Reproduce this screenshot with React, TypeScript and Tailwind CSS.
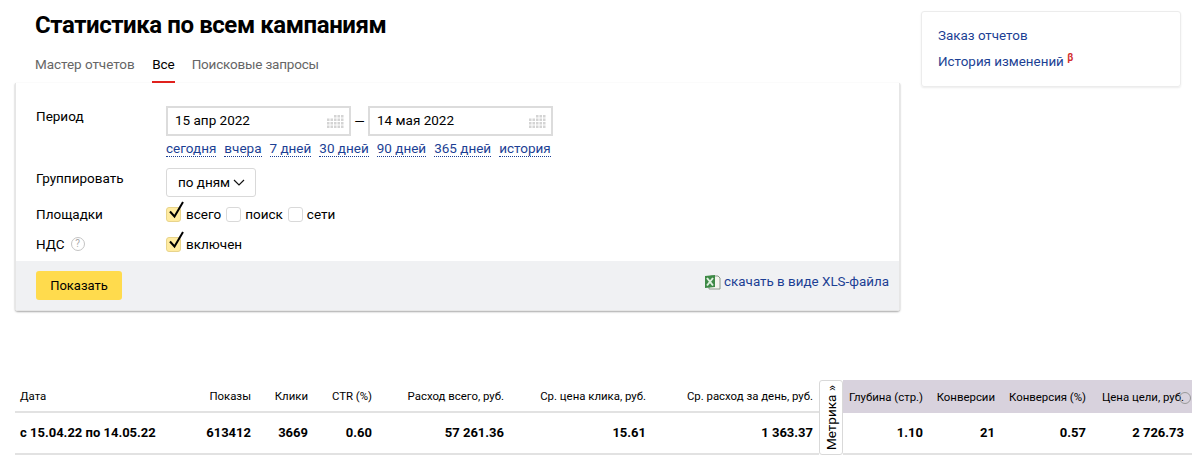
const font = "font-['Roboto','Noto_Sans',sans-serif]";

function CalendarDots() {
  const cells = [];
  for (let r = 0; r < 4; r++) {
    for (let c = 0; c < 5; c++) {
      if (r === 0 && c < 2) continue;
      cells.push(<rect key={`${r}-${c}`} x={c * 3.5} y={r * 3.5} width="2.5" height="2.5" fill="#d4d4d4" />);
    }
  }
  return (
    <svg width="17" height="13" viewBox="0 0 17 13" className="shrink-0">
      {cells}
    </svg>
  );
}

function DateInput({ value }: { value: string }) {
  return (
    <div className="flex h-[30px] w-[185px] items-center justify-between border-2 border-[#dcdcdc] pl-[7px] pr-[5px] text-[13.5px] text-black">
      <span className="pb-[2px]">{value}</span>
      <CalendarDots />
    </div>
  );
}

function Dotted({ children }: { children: string }) {
  return <a className="border-b border-dotted border-[#1c3f94] leading-[16px] text-[#1c3f94]">{children}</a>;
}

function Checkbox({ checked }: { checked?: boolean }) {
  return (
    <span
      className={`relative inline-block h-[15px] w-[15px] shrink-0 rounded-[3px] border ${
        checked ? "border-[#e8d48c] bg-[#ffeba0]" : "border-[#d9d9d9] bg-white"
      }`}
    >
      {checked && (
        <svg width="18" height="20" viewBox="0 0 18 20" className="absolute bottom-[1px] left-[1px]">
          <path d="M2 11.5 L6.5 16.5 L15 2" fill="none" stroke="#000" strokeWidth="2" />
        </svg>
      )}
    </span>
  );
}

function ExcelIcon() {
  return (
    <svg width="17" height="17" viewBox="0 0 17 17" className="shrink-0">
      <path d="M7 2 H14 L16 4 V15 H5 V3 Z" fill="#f4f4ee" stroke="#8a9a8a" />
      <path d="M1 2 L11 1 V13 L1 14 Z" fill="#3e8a46" />
      <path d="M3 4 L9 11.5 M9 4 L3 11.5" stroke="#dff0df" strokeWidth="2" />
    </svg>
  );
}

const header = ["Показы", "Клики", "CTR (%)", "Расход всего, руб.", "Ср. цена клика, руб.", "Ср. расход за день, руб."];
const values = ["613412", "3669", "0.60", "57 261.36", "15.61", "1 363.37"];
const metrikaHeader = ["Глубина (стр.)", "Конверсии", "Конверсия (%)", "Цена цели, руб."];
const metrikaValues = ["1.10", "21", "0.57", "2 726.73"];

export default function App() {
  return (
    <div className={`h-[461px] w-[1200px] overflow-hidden bg-white ${font}`}>
      <div className="flex items-start pl-[15px]">
        <div className="w-[885px]">
          <h1 className="pl-[20px] pt-[10px] text-[24px] font-bold leading-[30px] tracking-[-0.42px] text-black">
            Статистика по всем кампаниям
          </h1>
          <div className="flex gap-[17px] pl-[20px] pt-[13px] text-[13.5px] leading-[22px] tracking-[-0.05px] text-[#666]">
            <span className="pr-[0.5px]">Мастер отчетов</span>
            <span className="border-b-2 border-[#e0211d] pb-[6px] text-black">Все</span>
            <span className="tracking-[-0.2px]">Поисковые запросы</span>
          </div>
          <div className="rounded-b-[3px] border-x border-b border-[#e6e6e6] shadow-[0_1px_2px_rgba(0,0,0,0.35)]">
            <div className="grid grid-cols-[130px_1fr] pb-[7px] pl-[20px] pt-[23px] text-[13.5px] text-black">
              <div className="leading-[20px]">Период</div>
              <div>
                <div className="flex items-center gap-[3px]">
                  <DateInput value="15 апр 2022" />
                  <span className="w-[11px] text-center">—</span>
                  <DateInput value="14 мая 2022" />
                </div>
                <div className="flex gap-[8px] pt-[4px]">
                  <Dotted>сегодня</Dotted>
                  <Dotted>вчера</Dotted>
                  <Dotted>7 дней</Dotted>
                  <Dotted>30 дней</Dotted>
                  <Dotted>90 дней</Dotted>
                  <Dotted>365 дней</Dotted>
                  <Dotted>история</Dotted>
                </div>
              </div>
              <div className="pt-[11px] leading-[20px]">Группировать</div>
              <div className="pt-[11px]">
                <div className="flex h-[29px] w-[90px] items-center justify-center gap-[3px] rounded-[3px] border border-[#d9d9d9] pl-[1px]">
                  по дням
                  <svg width="12" height="7" viewBox="0 0 12 7">
                    <path d="M1 1 L6 6 L11 1" fill="none" stroke="#111" strokeWidth="1.2" />
                  </svg>
                </div>
              </div>
              <div className="pt-[7px] leading-[20px]">Площадки</div>
              <div className="flex items-center gap-[5px] pt-[7px] leading-[20px]">
                <Checkbox checked />
                <span>всего</span>
                <Checkbox />
                <span className="-ml-[1px]">поиск</span>
                <Checkbox />
                <span className="-ml-[1px]">сети</span>
              </div>
              <div className="flex items-center gap-[6px] pt-[10px] leading-[20px]">
                НДС
                <span className="flex h-[14px] w-[14px] items-center justify-center rounded-full border border-[#c4c4c4] text-[10px] leading-none text-[#aaa]">
                  ?
                </span>
              </div>
              <div className="flex items-center gap-[5px] pt-[10px] leading-[20px]">
                <Checkbox checked />
                <span>включен</span>
              </div>
            </div>
            <div className="flex h-[49px] items-center justify-between bg-[#f0f1f3] pl-[20px] pr-[10px]">
              <button className="h-[29px] w-[86px] rounded-[3px] bg-[#ffdb4d] text-[13px] text-black">Показать</button>
              <a className="flex items-center gap-[3px] pb-[6px] text-[13.4px] text-[#1c3f94]">
                <ExcelIcon />
                скачать в виде XLS-файла
              </a>
            </div>
          </div>
        </div>
        <div className="ml-[21px] mt-[11px] h-[76px] w-[260px] rounded-[3px] border border-[#ececec] pl-[16px] pt-[11px] text-[13.4px] leading-[26px] text-[#1c3f94] shadow-[0_1px_2px_rgba(0,0,0,0.08)]">
          <div>Заказ отчетов</div>
          <div>
            История изменений <sup className="text-[10px] font-bold text-[#d32f2f]">β</sup>
          </div>
        </div>
      </div>

      <div className="ml-[15px] mt-[69px] grid w-[1177px] grid-cols-[155px_81px_57px_64px_132px_142px_167px_6px_24px_80px_72px_91px_98px_8px] grid-rows-[33px_42px] text-black">
        <div className="flex items-center border-b-2 border-[#e2e2e2] pl-[5px] pt-[2px] text-[11.4px]">Дата</div>
        {header.map((h) => (
          <div key={h} className="flex items-center justify-end whitespace-nowrap border-b-2 border-[#e2e2e2] pt-[2px] text-[11.4px]">
            {h}
          </div>
        ))}
        <div className="border-b-2 border-[#e2e2e2]"></div>
        <div className="row-span-2 flex items-center justify-center rounded-[3px] border border-[#d9d9d9] bg-white text-[13.5px]">
          <span className="rotate-180 whitespace-nowrap [writing-mode:vertical-rl]">Метрика »</span>
        </div>
        {metrikaHeader.map((h) => (
          <div key={h} className="flex items-center justify-end whitespace-nowrap bg-[#d8d2dd] pt-[2px] text-[11.4px]">
            {h}
          </div>
        ))}
        <div className="relative bg-[#d8d2dd]">
          <span className="absolute left-[-5px] top-[12px] h-[12px] w-[12px] rounded-full border border-[#999]"></span>
        </div>

        <div className="flex items-center whitespace-nowrap border-b-2 border-[#e2e2e2] pl-[5px] text-[13px] font-bold">с 15.04.22 по 14.05.22</div>
        {values.map((v) => (
          <div key={v} className="flex items-center justify-end whitespace-nowrap border-b-2 border-[#e2e2e2] text-[13px] font-bold">
            {v}
          </div>
        ))}
        <div className="border-b-2 border-[#e2e2e2]"></div>
        {metrikaValues.map((v) => (
          <div key={v} className="flex items-center justify-end whitespace-nowrap border-b-2 border-[#e2e2e2] text-[13px] font-bold">
            {v}
          </div>
        ))}
        <div className="border-b-2 border-[#e2e2e2]"></div>
      </div>
    </div>
  );
}
